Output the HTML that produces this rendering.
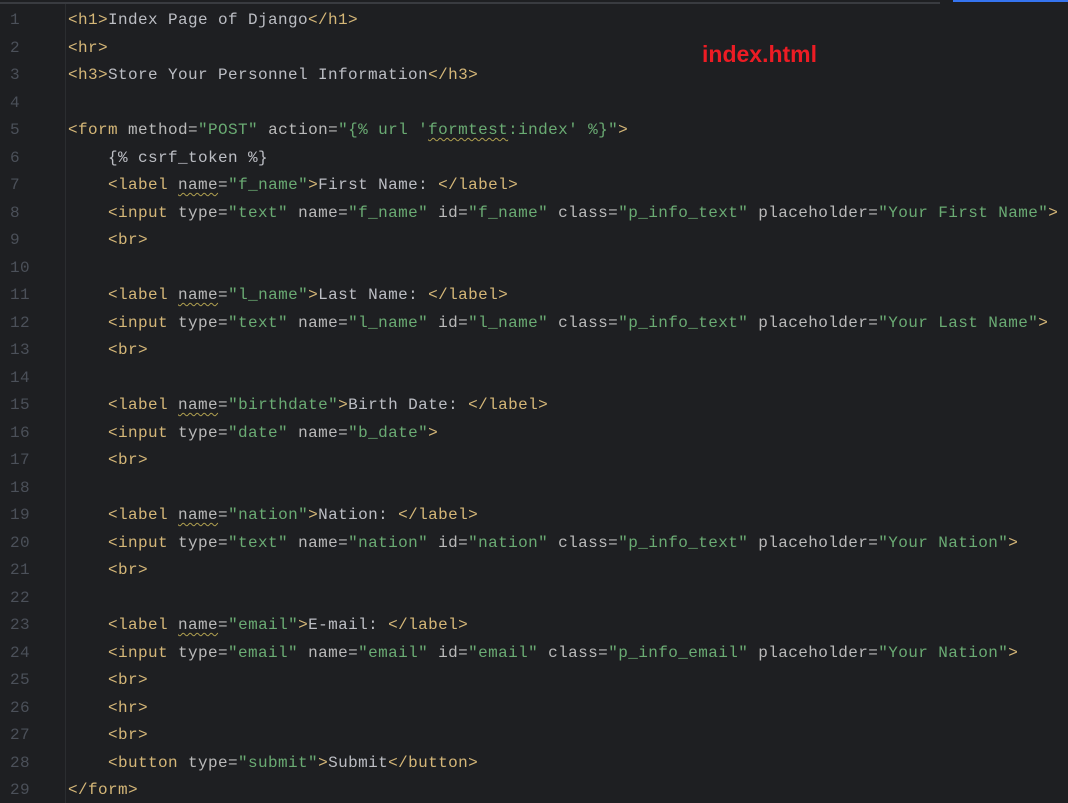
<!DOCTYPE html>
<html><head><meta charset="utf-8"><style>
html,body{margin:0;padding:0;background:#1e1f22;width:1068px;height:803px;overflow:hidden;position:relative}
.top{position:absolute;left:0;top:2px;width:940px;height:2px;background:#393b40}
.blue{position:absolute;left:953px;top:0;width:115px;height:2px;background:#3574f0}
.gut{position:absolute;left:65px;top:4px;width:1px;height:799px;background:#2b2d30}
.code{position:absolute;left:0;top:7px;font-family:"Liberation Mono",monospace;font-size:16px;letter-spacing:0.4px;line-height:27.5px;color:#bcbec4}
.ln{position:absolute;left:10px;width:40px;color:#4b5059;white-space:pre}
.l{position:absolute;left:68px;white-space:pre}
.t{color:#d5b778}.a{color:#bababa}.s{color:#6aab73}
.w{text-decoration:underline wavy #b0a050;text-decoration-thickness:1px;text-underline-offset:3px}
.red{position:absolute;left:702px;top:41px;font-family:"Liberation Sans",sans-serif;font-weight:bold;font-size:23px;color:#ed1c24}
</style></head><body>
<div class="top"></div><div class="blue"></div><div class="gut"></div>
<div class="red">index.html</div>
<div class="code"><div style="position:relative">
<div class="ln" style="top:0">1</div><div class="l" style="top:0"><span class="t">&lt;h1&gt;</span>Index Page of Django<span class="t">&lt;/h1&gt;</span></div>
<div class="ln" style="top:27.5px">2</div><div class="l" style="top:27.5px"><span class="t">&lt;hr&gt;</span></div>
<div class="ln" style="top:55px">3</div><div class="l" style="top:55px"><span class="t">&lt;h3&gt;</span>Store Your Personnel Information<span class="t">&lt;/h3&gt;</span></div>
<div class="ln" style="top:82.5px">4</div>
<div class="ln" style="top:110px">5</div><div class="l" style="top:110px"><span class="t">&lt;form </span><span class="a">method=</span><span class="s">"POST"</span> <span class="a">action=</span><span class="s">"{% url '<span class="w">formtest</span>:index' %}"</span><span class="t">&gt;</span></div>
<div class="ln" style="top:137.5px">6</div><div class="l" style="top:137.5px">    {% csrf_token %}</div>
<div class="ln" style="top:165px">7</div><div class="l" style="top:165px">    <span class="t">&lt;label </span><span class="a"><span class="w">name</span>=</span><span class="s">"f_name"</span><span class="t">&gt;</span>First Name: <span class="t">&lt;/label&gt;</span></div>
<div class="ln" style="top:192.5px">8</div><div class="l" style="top:192.5px">    <span class="t">&lt;input </span><span class="a">type=</span><span class="s">"text"</span> <span class="a">name=</span><span class="s">"f_name"</span> <span class="a">id=</span><span class="s">"f_name"</span> <span class="a">class=</span><span class="s">"p_info_text"</span> <span class="a">placeholder=</span><span class="s">"Your First Name"</span><span class="t">&gt;</span></div>
<div class="ln" style="top:220px">9</div><div class="l" style="top:220px">    <span class="t">&lt;br&gt;</span></div>
<div class="ln" style="top:247.5px">10</div>
<div class="ln" style="top:275px">11</div><div class="l" style="top:275px">    <span class="t">&lt;label </span><span class="a"><span class="w">name</span>=</span><span class="s">"l_name"</span><span class="t">&gt;</span>Last Name: <span class="t">&lt;/label&gt;</span></div>
<div class="ln" style="top:302.5px">12</div><div class="l" style="top:302.5px">    <span class="t">&lt;input </span><span class="a">type=</span><span class="s">"text"</span> <span class="a">name=</span><span class="s">"l_name"</span> <span class="a">id=</span><span class="s">"l_name"</span> <span class="a">class=</span><span class="s">"p_info_text"</span> <span class="a">placeholder=</span><span class="s">"Your Last Name"</span><span class="t">&gt;</span></div>
<div class="ln" style="top:330px">13</div><div class="l" style="top:330px">    <span class="t">&lt;br&gt;</span></div>
<div class="ln" style="top:357.5px">14</div>
<div class="ln" style="top:385px">15</div><div class="l" style="top:385px">    <span class="t">&lt;label </span><span class="a"><span class="w">name</span>=</span><span class="s">"birthdate"</span><span class="t">&gt;</span>Birth Date: <span class="t">&lt;/label&gt;</span></div>
<div class="ln" style="top:412.5px">16</div><div class="l" style="top:412.5px">    <span class="t">&lt;input </span><span class="a">type=</span><span class="s">"date"</span> <span class="a">name=</span><span class="s">"b_date"</span><span class="t">&gt;</span></div>
<div class="ln" style="top:440px">17</div><div class="l" style="top:440px">    <span class="t">&lt;br&gt;</span></div>
<div class="ln" style="top:467.5px">18</div>
<div class="ln" style="top:495px">19</div><div class="l" style="top:495px">    <span class="t">&lt;label </span><span class="a"><span class="w">name</span>=</span><span class="s">"nation"</span><span class="t">&gt;</span>Nation: <span class="t">&lt;/label&gt;</span></div>
<div class="ln" style="top:522.5px">20</div><div class="l" style="top:522.5px">    <span class="t">&lt;input </span><span class="a">type=</span><span class="s">"text"</span> <span class="a">name=</span><span class="s">"nation"</span> <span class="a">id=</span><span class="s">"nation"</span> <span class="a">class=</span><span class="s">"p_info_text"</span> <span class="a">placeholder=</span><span class="s">"Your Nation"</span><span class="t">&gt;</span></div>
<div class="ln" style="top:550px">21</div><div class="l" style="top:550px">    <span class="t">&lt;br&gt;</span></div>
<div class="ln" style="top:577.5px">22</div>
<div class="ln" style="top:605px">23</div><div class="l" style="top:605px">    <span class="t">&lt;label </span><span class="a"><span class="w">name</span>=</span><span class="s">"email"</span><span class="t">&gt;</span>E-mail: <span class="t">&lt;/label&gt;</span></div>
<div class="ln" style="top:632.5px">24</div><div class="l" style="top:632.5px">    <span class="t">&lt;input </span><span class="a">type=</span><span class="s">"email"</span> <span class="a">name=</span><span class="s">"email"</span> <span class="a">id=</span><span class="s">"email"</span> <span class="a">class=</span><span class="s">"p_info_email"</span> <span class="a">placeholder=</span><span class="s">"Your Nation"</span><span class="t">&gt;</span></div>
<div class="ln" style="top:660px">25</div><div class="l" style="top:660px">    <span class="t">&lt;br&gt;</span></div>
<div class="ln" style="top:687.5px">26</div><div class="l" style="top:687.5px">    <span class="t">&lt;hr&gt;</span></div>
<div class="ln" style="top:715px">27</div><div class="l" style="top:715px">    <span class="t">&lt;br&gt;</span></div>
<div class="ln" style="top:742.5px">28</div><div class="l" style="top:742.5px">    <span class="t">&lt;button </span><span class="a">type=</span><span class="s">"submit"</span><span class="t">&gt;</span>Submit<span class="t">&lt;/button&gt;</span></div>
<div class="ln" style="top:770px">29</div><div class="l" style="top:770px"><span class="t">&lt;/form&gt;</span></div>
</div></div>
</body></html>
